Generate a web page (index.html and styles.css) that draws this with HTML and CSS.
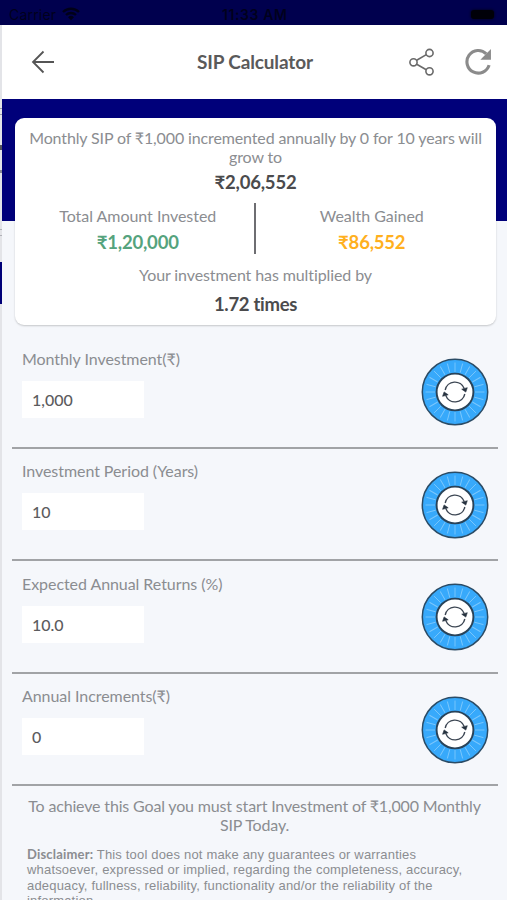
FILE: index.html
```html
<!DOCTYPE html>
<html lang="en">
<head>
<meta charset="utf-8">
<title>SIP Calculator</title>
<link rel="stylesheet" href="styles.css">
</head>
<body>
<svg class="defs" width="0" height="0" aria-hidden="true">
  <symbol id="dial" viewBox="0 0 68 68">
    <circle cx="34" cy="34" r="32.7" fill="#37a9fb" stroke="#2b4c66" stroke-width="1.5"/>
    <g stroke="#7cc7fc" stroke-width=".9">
      <g id="spokes"><path id="spoke" d="M34 4.500v9.500M34 54v9.500M4.500 34h9.500M54 34h9.500"/>
      <use href="#spoke" transform="rotate(15 34 34)"/><use href="#spoke" transform="rotate(30 34 34)"/>
      <use href="#spoke" transform="rotate(45 34 34)"/><use href="#spoke" transform="rotate(60 34 34)"/>
      <use href="#spoke" transform="rotate(75 34 34)"/></g>
    </g>
    <circle cx="34" cy="34" r="18.4" fill="#fff" stroke="#294359" stroke-width="1.9"/>
    <g fill="none" stroke="#3b4552" stroke-width="1.4">
      <path d="M24.200 32a9.900 9.900 0 0 1 19-1.400"/>
      <path d="M43.800 36a9.900 9.900 0 0 1-19 1.400"/>
    </g>
    <path d="M40.700 31.200l5.600-1.500-1.500 4.400zM27.200 36.800l-5.600 1.500 1.500-4.400z" fill="#25313e" stroke="#25313e" stroke-width=".6"/>
  </symbol>
</svg>
<div class="screen">
  <div class="statusbar">
    <span class="carrier">Carrier</span>
    <svg class="wifi" viewBox="0 0 18 14"><path d="M1 5a11.5 11.5 0 0 1 16 0M4 8a7.3 7.3 0 0 1 10 0" fill="none" stroke="#000018" stroke-width="2.4"/><path d="M6 10.2a4.3 4.3 0 0 1 6 0l-3 3z" fill="#000018"/></svg>
    <span class="clock">11:33 AM</span>
    <span class="battery"></span>
  </div>
  <div class="body">
    <div class="edge"><i class="edge-block"></i></div>
    <div class="page">
      <header class="topbar">
        <svg class="back" viewBox="0 0 24 24"><path d="M12.5 1.5L2 12l10.500 10.500M2 12h21" fill="none" stroke="#555" stroke-width="1.800"/></svg>
        <h1>SIP Calculator</h1>
        <svg class="share" viewBox="0 0 28 28"><g fill="none" stroke="#6a6a6a" stroke-width="1.600"><path d="M8.700 12.300l9.600-5.700M8.700 16.200l9.600 5.500"/><circle cx="5.500" cy="14.300" r="3.600"/><circle cx="21.500" cy="5" r="3.600"/><circle cx="21.500" cy="23.300" r="3.600"/></g></svg>
        <svg class="reload" viewBox="0 0 26 26"><path d="M20.500 5.600A10.900 10.900 0 1 0 23.200 16.500" fill="none" stroke="#8b8b8b" stroke-width="3"/><path d="M25 1v10.200H14.800z" fill="#8b8b8b"/></svg>
      </header>
      <div class="band">
        <section class="card">
          <p class="lead">Monthly SIP of ₹1,000 incremented annually by 0 for 10 years will<br>grow to</p>
          <p class="total">₹2,06,552</p>
          <div class="split">
            <div class="half"><span class="cap invested-cap">Total Amount Invested</span><b class="amount invested">₹1,20,000</b></div>
            <div class="half"><span class="cap gained-cap">Wealth Gained</span><b class="amount gained">₹86,552</b></div>
          </div>
          <p class="cap multiplied">Your investment has multiplied by</p>
          <p class="times">1.72 times</p>
        </section>
      </div>
      <main class="rows">
        <div class="row"><div><label>Monthly Investment(₹)</label><div class="field">1,000</div></div><svg class="dial"><use href="#dial"/></svg></div>
        <div class="row"><div><label>Investment Period (Years)</label><div class="field">10</div></div><svg class="dial"><use href="#dial"/></svg></div>
        <div class="row"><div><label>Expected Annual Returns (%)</label><div class="field">10.0</div></div><svg class="dial"><use href="#dial"/></svg></div>
        <div class="row"><div><label>Annual Increments(₹)</label><div class="field">0</div></div><svg class="dial"><use href="#dial"/></svg></div>
      </main>
      <p class="goal">To achieve this Goal you must start Investment of ₹1,000 Monthly<br>SIP Today.</p>
      <p class="disclaimer"><b>Disclaimer:</b> This tool does not make any guarantees or warranties<br>whatsoever, expressed or implied, regarding the completeness, accuracy,<br>adequacy, fullness, reliability, functionality and/or the reliability of the<br>information.</p>
    </div>
  </div>
</div>
</body>
</html>
```

FILE: styles.css
```css
* { box-sizing: border-box; }
body, p, h1 { margin: 0; }
.defs { display: block; height: 0; }
.screen {
  width: 507px; height: 900px; overflow: hidden;
  display: flex; flex-direction: column;
  font-family: Lato, "Noto Sans", sans-serif;
  font-variant-ligatures: none;
  color: #8b8d91; white-space: nowrap;
}
.statusbar {
  flex: 0 0 25px; background: #00004e; color: #00001c;
  display: grid; grid-template-columns: 62px 18px 1fr 80px 25px 11px;
  padding-left: 9px; padding-top: 3px; align-items: center;
  font: 14px "Inter", sans-serif;
}
.carrier { letter-spacing: .2px; }
.wifi { width: 18px; height: 14px; margin-left: -9px; }
.clock { justify-self: start; margin-left: 133px; font-weight: 600; font-size: 14px; letter-spacing: .6px; }
.battery { grid-column: 5; width: 23px; height: 9px; border-radius: 3px; background: #000008; box-shadow: 0 0 3px #000010; }
.body { flex: 1; display: flex; min-height: 0; }
.edge {
  flex: 0 0 2px; padding-top: 237px;
  background:
    linear-gradient(#9a9ca8, #9a9ca8) 0 83px / 2px 1px no-repeat,
    linear-gradient(#9a9ca8, #9a9ca8) 0 89px / 2px 1px no-repeat,
    linear-gradient(#55565e, #55565e) 0 120px / 2px 5px no-repeat,
    linear-gradient(#8a8b94, #8a8b94) 0 145px / 2px 3px no-repeat,
    linear-gradient(#b0b1b8, #b0b1b8) 0 204px / 2px 1px no-repeat,
    linear-gradient(#b0b1b8, #b0b1b8) 0 210px / 2px 1px no-repeat,
    #e3e4e8;
}
.edge-block { display: block; height: 42px; background: #000078; }
.page { flex: 1; min-width: 0; background: #f5f7fb; }
.topbar {
  height: 73.500px; background: #fff; display: flex; align-items: center;
  padding: 0 15.500px 0 29px;
}
.back { width: 24px; height: 24px; }
h1 { flex: 1; margin-left: 142px; font-size: 19px; line-height: 24px; font-weight: 700; color: #5a5a5a; letter-spacing: -.15px; }
.share { width: 28px; height: 28px; margin-right: 28.500px; }
.reload { width: 27px; height: 27px; }
.band { height: 227.500px; padding: 19.500px 11px 0 13px; background: linear-gradient(#00007a 0 122px, #f5f7fb 122px); }
.card {
  height: 207px; background: #fff; border-radius: 9px; text-align: center;
  padding-top: 10px; box-shadow: 0 1px 2px rgba(0,0,0,.2);
}
.lead { font-size: 16px; line-height: 19px; letter-spacing: -.13px; }
.total, .times { color: #4b4b4d; font-size: 18.500px; line-height: 24px; font-weight: 700; letter-spacing: -.2px; }
.total { margin-top: 4px; }
.split { display: grid; grid-template-columns: 1fr 1fr; margin-top: 9px; height: 50px; }
.half { display: flex; flex-direction: column; align-items: center; }
.half:first-child { border-right: 2px solid #6e6e72; padding-left: 7px; }
.half:last-child { padding-right: 8px; }
.cap { font-size: 16px; line-height: 20px; letter-spacing: -.1px; }
.half .cap { margin-top: 3px; letter-spacing: -.03px; }
.amount { font-size: 18.500px; line-height: 24px; margin-top: 4px; letter-spacing: -.2px; }
.invested { color: #55a37d; }
.gained { color: #ffb01e; }
.multiplied { margin-top: 12px; }
.times { margin-top: 7px; letter-spacing: -.3px; }
.rows { padding: 10px 9px 0 10px; }
.row {
  height: 112.500px; border-bottom: 2px solid #a1a3a6; padding: 11.500px 9px 0 10px;
  display: flex; justify-content: space-between;
}
.row label { display: block; font-size: 16px; line-height: 22px; letter-spacing: -.06px; }
.field { width: 122px; height: 37px; margin-top: 11px; padding-left: 10px; background: #fff; color: #5c5c5e; font-size: 16px; line-height: 37px; font-weight: 500; }
.dial { width: 68px; height: 68px; margin-top: 10.500px; }
.goal { text-align: center; font-size: 16px; line-height: 19px; margin-top: 9.500px; letter-spacing: -.16px; }
.disclaimer { font: 13px/15.500px "Liberation Sans", sans-serif; letter-spacing: .18px; margin: 13px 0 0 25px; }
.disclaimer b { font-family: Lato, sans-serif; }
```
